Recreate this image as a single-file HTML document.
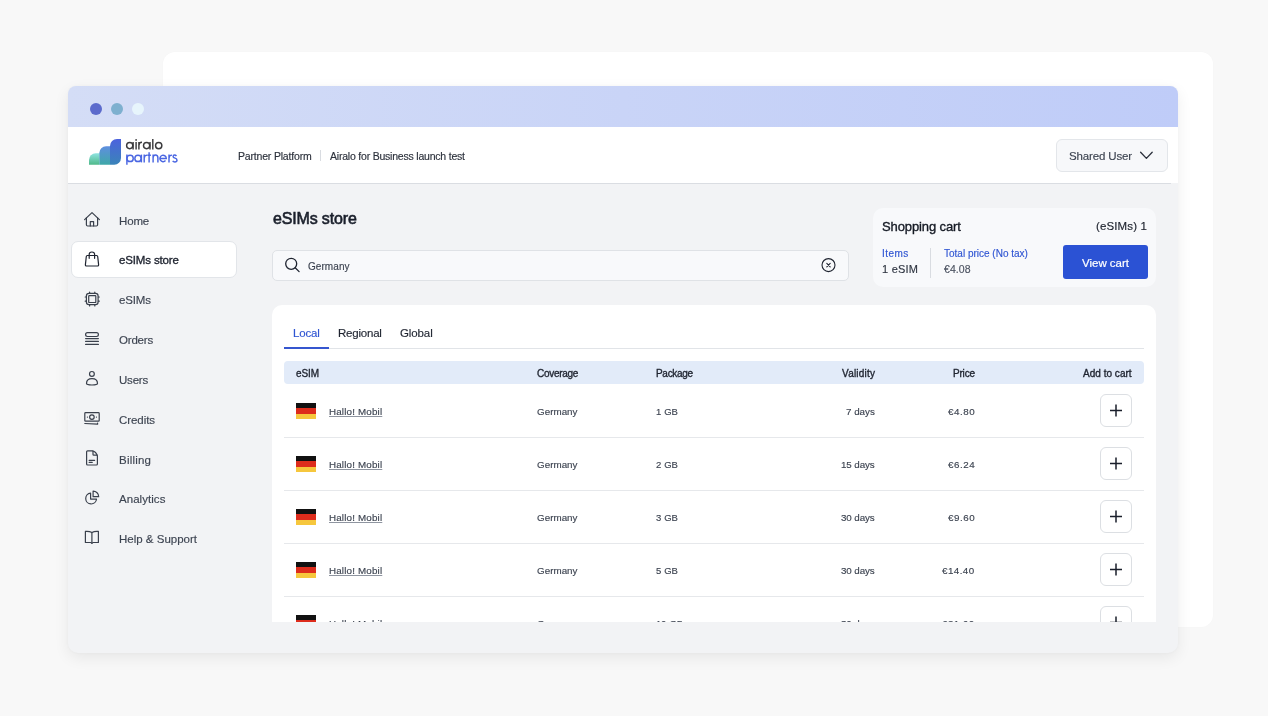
<!DOCTYPE html>
<html><head><meta charset="utf-8">
<style>
*{margin:0;padding:0;box-sizing:border-box}
html,body{width:1268px;height:716px;overflow:hidden;background:#f8f8f8;font-family:"Liberation Sans",sans-serif}
.a{position:absolute}
.t{position:absolute;white-space:nowrap;line-height:1;will-change:transform;font-family:"Liberation Sans",sans-serif}
#back{left:163px;top:52px;width:1050px;height:575px;border-radius:12px;background:#fff;box-shadow:0 0 2px rgba(0,0,0,0.02)}
#win{left:68px;top:86px;width:1110px;height:567px;border-radius:8px 8px 10px 10px;background:#f2f3f5;box-shadow:0 5px 15px rgba(0,0,0,0.07),0 0 3px rgba(0,0,0,0.03);overflow:hidden}
#titlebar{left:0;top:0;width:1110px;height:41px;background:linear-gradient(90deg,#d4ddf6 0%,#c9d4f7 50%,#bfccf8 100%)}
.dot{width:12px;height:12px;border-radius:50%;top:17px}
#header{left:0;top:41px;width:1110px;height:56px;background:#fff}
#hline{left:0;top:97px;width:1103px;height:1px;background:#dadde2}
#dd{left:1056px;top:139px;width:112px;height:33px;border-radius:6px;background:#f7f8fa;border:1px solid #e3e6ea}
#hdiv{left:320px;top:150px;width:1px;height:11px;background:#d9dce1}
#active{left:70.5px;top:241px;width:166px;height:36.5px;border-radius:7px;background:#fff;border:1px solid #e2e5e9}
#search{left:272px;top:250px;width:577px;height:30.5px;border-radius:5px;background:#f8f9fb;border:1px solid #dfe2e6}
#cart{left:873px;top:207.5px;width:283px;height:79.5px;border-radius:10px;background:#f8f9fb}
#cdiv{left:930px;top:247.5px;width:1px;height:30px;background:#d9dce1}
#vbtn{left:1063px;top:245px;width:85px;height:34px;border-radius:3px;background:#2b52d4}
#clip{left:0;top:0;width:1268px;height:621.5px;overflow:hidden}
#card{left:272px;top:304.5px;width:884px;height:400px;border-radius:10px;background:#fff}
#tabline{left:284px;top:348px;width:860px;height:1px;background:#e1e4e8}
#tabul{left:284px;top:347px;width:45px;height:2px;background:#3556cf}
#thead{left:284px;top:361px;width:860px;height:23px;border-radius:4px;background:#e2ebf9}
.sep{left:284px;width:860px;height:1px;background:#e6e8eb}
.flag{left:295.6px;width:20.4px;height:15.6px;background:linear-gradient(180deg,#111 0 33.3%,#dd2c1c 33.3% 66.6%,#f6c73d 66.6% 100%)}
.plus{left:1100px;width:32px;height:32.5px;border-radius:6px;border:1px solid #dcdfe3;background:#fff}
svg{position:absolute;overflow:visible}
</style></head>
<body>
<div id="back" class="a"></div>
<div id="win" class="a">
  <div id="titlebar" class="a"></div>
  <div class="a dot" style="left:22px;background:#5c6bcc"></div>
  <div class="a dot" style="left:43px;background:#7eb0cf"></div>
  <div class="a dot" style="left:64px;background:#e7f5fc"></div>
  <div id="header" class="a"></div>
  <div id="hline" class="a"></div>
</div>
<!-- logo -->
<svg style="left:0;top:0" width="1268" height="716" viewBox="0 0 1268 716">
  <defs>
    <linearGradient id="g1" x1="0" y1="0" x2="0" y2="1"><stop offset="0" stop-color="#8fe3e0"/><stop offset="1" stop-color="#4fb98a"/></linearGradient>
    <linearGradient id="g2" x1="0" y1="0" x2="0" y2="1"><stop offset="0" stop-color="#5f8ee0"/><stop offset="1" stop-color="#3fa8a8"/></linearGradient>
    <linearGradient id="g3" x1="0" y1="0" x2="0" y2="1"><stop offset="0" stop-color="#4c62de"/><stop offset="1" stop-color="#3a84b8"/></linearGradient>
  </defs>
  <path d="M89 164.7 V160 A6.7 6.7 0 0 1 95.7 153.3 H99.3 V164.7 Z" fill="url(#g1)"/>
  <path d="M99.3 164.7 V153 A6.8 6.8 0 0 1 106.1 146.2 H110 V164.7 Z" fill="url(#g2)"/>
  <path d="M110 164.7 V146 A7 7 0 0 1 117 139 H121 V158 A6.7 6.7 0 0 1 114.3 164.7 Z" fill="url(#g3)"/>
  <g fill="none" stroke="#3b3b3d" stroke-width="1.45" stroke-linecap="butt">
    <circle cx="129.7" cy="145.6" r="3.1"/><path d="M133.1 142 V149.4"/>
    <path d="M136.1 142 V149.4"/><circle cx="136.1" cy="139.9" r="0.9" fill="#3b3b3d" stroke="none"/>
    <path d="M138.9 142 V149.4 M138.9 145.4 Q139 142.3 142 142.3"/>
    <circle cx="146.6" cy="145.6" r="3.1"/><path d="M150 142 V149.4"/>
    <path d="M152.8 139 V149.4"/>
    <circle cx="158.7" cy="145.6" r="3.15"/>
  </g>
  <g fill="none" stroke="#4a66e2" stroke-width="1.45" stroke-linecap="butt">
    <circle cx="130.1" cy="158.4" r="3.15"/><path d="M126.9 154.6 V164.7"/>
    <circle cx="138" cy="158.4" r="3.15"/><path d="M141.4 154.6 V162.4"/>
    <path d="M144.2 154.6 V162.4 M144.2 158.2 Q144.3 155.1 147.3 155.1"/>
    <path d="M149.1 152.2 V162.4 M147.4 155.2 H150.9"/>
    <path d="M153.1 154.6 V162.4 M153.1 158 Q153.1 155 155.5 155 Q157.9 155 157.9 158 V162.4"/>
    <path d="M159.9 158.4 H166.3 A3.2 3.2 0 1 0 165.5 160.6"/>
    <path d="M169 154.6 V162.4 M169 158.2 Q169.1 155.1 172 155.1"/>
    <path d="M176.4 156.1 Q175.8 155 174.5 155 Q173.1 155 173.1 156.4 Q173.1 157.6 175 158.1 Q177 158.6 177 160.3 Q177 162 174.8 162 Q173.4 162 172.7 160.9"/>
  </g>
</svg>
<div id="dd" class="a"></div>
<div id="hdiv" class="a"></div>
<svg style="left:0;top:0" width="1268" height="716" viewBox="0 0 1268 716" fill="none" stroke="#2b303b" stroke-width="1.3" stroke-linecap="round" stroke-linejoin="round">
  <path d="M1140.6 152.2 L1146.4 158.4 L1152.2 152.2"/>
</svg>
<div id="active" class="a"></div>
<!-- sidebar icons -->
<svg style="left:0;top:0" width="1268" height="716" viewBox="0 0 1268 716" fill="none" stroke="#3a404c" stroke-width="1.2" stroke-linecap="round" stroke-linejoin="round">
  <!-- home -->
  <path d="M84.6 219.6 L92 212.6 L99.4 219.6"/>
  <path d="M86.4 217.8 V224.8 Q86.4 226 87.6 226 H96.4 Q97.6 226 97.6 224.8 V217.8"/>
  <path d="M90.3 226 V221.6 H93.6 V226"/>
  <!-- bag -->
  <path d="M87.3 255.5 H96.6 Q97.6 255.5 97.7 256.5 L98.6 264.6 Q98.8 266 97.4 266 H86.6 Q85.2 266 85.4 264.6 L86.3 256.5 Q86.4 255.5 87.3 255.5 Z" stroke="#1f2430"/>
  <path d="M89.2 258.3 V254.3 Q89.2 252 91.9 252 Q94.6 252 94.6 254.3 V258.3" stroke="#1f2430"/>
  <!-- chip -->
  <rect x="86.4" y="293.4" width="11.7" height="11.3" rx="2.6"/>
  <rect x="88.7" y="295.6" width="7.1" height="6.9" rx="0.6"/>
  <path d="M89.6 292.2 V293.2 M94.8 292.2 V293.2 M89.6 304.9 V305.9 M94.8 304.9 V305.9 M85.2 297 H86.2 M85.2 301.2 H86.2 M98.3 297 H99.3 M98.3 301.2 H99.3"/>
  <!-- orders -->
  <rect x="85.6" y="332.7" width="12.8" height="3.8" rx="1.9"/>
  <path d="M85.6 338.6 H98.4 M85.6 341.4 H98.4 M85.6 344.4 H98.4"/>
  <!-- users -->
  <circle cx="91.9" cy="373.9" r="2.4"/>
  <path d="M86.5 383.6 C86.5 380.4 88.9 378.7 92 378.7 C95.1 378.7 97.5 380.4 97.5 383.6 C97.5 384.7 95 385 92 385 C89 385 86.5 384.7 86.5 383.6 Z"/>
  <!-- credits -->
  <rect x="84.8" y="412.6" width="14.4" height="8.6" rx="0.8"/>
  <circle cx="91.9" cy="417.1" r="2.3"/>
  <path d="M87.4 417.1 h0.1 M96.4 417.1 h0.1"/>
  <path d="M84.8 423.5 L97.6 424.1 V423"/>
  <!-- billing -->
  <path d="M87.6 450.8 H92.4 Q96.2 451.6 97.4 456 V464 Q97.4 465 96.4 465 H87.6 Q86.6 465 86.6 464 V451.8 Q86.6 450.8 87.6 450.8 Z"/>
  <path d="M93 451 V454.4 Q93 455.2 93.8 455.2 H97.2"/>
  <path d="M89.2 460.4 H94.6 M89.2 462.4 H92.2"/>
  <!-- analytics -->
  <path d="M90.6 493.2 A5.4 5.4 0 1 0 96.5 499.1 H90.6 Z"/>
  <path d="M93.1 491.1 V496.7 H98.7 A5.6 5.6 0 0 0 93.1 491.1 Z"/>
  <!-- help book -->
  <path d="M85.4 531.4 Q89.4 531 91.9 532.6 Q94.4 531 98.4 531.4 V542.5 H93.2 Q91.9 542.6 91.9 543.4 Q91.9 542.6 90.6 542.5 H85.4 Z"/>
  <path d="M91.9 532.8 V543"/>
</svg>
<div id="search" class="a"></div>
<svg style="left:0;top:0" width="1268" height="716" viewBox="0 0 1268 716" fill="none" stroke="#1f2430" stroke-width="1.3" stroke-linecap="round">
  <circle cx="291.2" cy="263.8" r="5.5"/>
  <path d="M295.2 267.8 L299.1 271.6"/>
  <circle cx="828.5" cy="265.1" r="6.5" stroke-width="1.1"/>
  <path d="M826.8 263.4 L830.2 266.8 M830.2 263.4 L826.8 266.8" stroke-width="1.1"/>
</svg>
<div id="cart" class="a"></div>
<div id="cdiv" class="a"></div>
<div id="vbtn" class="a"></div>
<div id="clip" class="a">
  <div id="card" class="a"></div>
  <div id="tabline" class="a"></div>
  <div id="tabul" class="a"></div>
  <div id="thead" class="a"></div>
  <div class="a sep" style="top:437px"></div>
  <div class="a sep" style="top:490px"></div>
  <div class="a sep" style="top:543px"></div>
  <div class="a sep" style="top:596px"></div>
  <div class="a flag" style="top:403px"></div>
  <div class="a flag" style="top:456px"></div>
  <div class="a flag" style="top:509px"></div>
  <div class="a flag" style="top:562px"></div>
  <div class="a flag" style="top:615px"></div>
  <div class="a plus" style="top:394.2px"></div>
  <div class="a plus" style="top:447.2px"></div>
  <div class="a plus" style="top:500.2px"></div>
  <div class="a plus" style="top:553.2px"></div>
  <div class="a plus" style="top:606.2px"></div>
  <svg style="left:0;top:0" width="1268" height="716" viewBox="0 0 1268 716" fill="none" stroke="#1a1f2b" stroke-width="1.5">
    <path d="M1110 410.5 H1122 M1116 404.5 V416.5"/>
    <path d="M1110 463.5 H1122 M1116 457.5 V469.5"/>
    <path d="M1110 516.5 H1122 M1116 510.5 V522.5"/>
    <path d="M1110 569.5 H1122 M1116 563.5 V575.5"/>
    <path d="M1110 622.5 H1122 M1116 616.5 V628.5"/>
  </svg>
<div class="t" style="top:151.00px;font-size:10.5px;color:#2b303b;letter-spacing:-0.183px;left:237.50px;-webkit-text-stroke:0.15px currentColor;">Partner Platform</div>
<div class="t" style="top:151.00px;font-size:10.5px;color:#2b303b;letter-spacing:-0.208px;left:330.20px;-webkit-text-stroke:0.15px currentColor;">Airalo for Business launch test</div>
<div class="t" style="top:151.00px;font-size:11.5px;color:#3d4451;letter-spacing:-0.136px;left:1068.50px;-webkit-text-stroke:0.15px currentColor;">Shared User</div>
<div class="t" style="top:216.00px;font-size:11.5px;color:#3d4451;letter-spacing:-0.159px;left:119.00px;-webkit-text-stroke:0.15px currentColor;">Home</div>
<div class="t" style="top:255.00px;font-size:11.5px;color:#1f2430;letter-spacing:-0.145px;left:119.00px;-webkit-text-stroke:0.35px currentColor;">eSIMs store</div>
<div class="t" style="top:295.00px;font-size:11.5px;color:#3d4451;letter-spacing:-0.148px;left:119.00px;-webkit-text-stroke:0.15px currentColor;">eSIMs</div>
<div class="t" style="top:335.00px;font-size:11.5px;color:#3d4451;letter-spacing:-0.189px;left:119.00px;-webkit-text-stroke:0.15px currentColor;">Orders</div>
<div class="t" style="top:375.00px;font-size:11.5px;color:#3d4451;letter-spacing:-0.208px;left:119.00px;-webkit-text-stroke:0.15px currentColor;">Users</div>
<div class="t" style="top:415.00px;font-size:11.5px;color:#3d4451;letter-spacing:-0.071px;left:119.00px;-webkit-text-stroke:0.15px currentColor;">Credits</div>
<div class="t" style="top:455.00px;font-size:11.5px;color:#3d4451;letter-spacing:0.220px;left:119.00px;-webkit-text-stroke:0.15px currentColor;">Billing</div>
<div class="t" style="top:494.00px;font-size:11.5px;color:#3d4451;letter-spacing:0.048px;left:119.00px;-webkit-text-stroke:0.15px currentColor;">Analytics</div>
<div class="t" style="top:534.00px;font-size:11.5px;color:#3d4451;left:119.00px;-webkit-text-stroke:0.15px currentColor;">Help &amp; Support</div>
<div class="t" style="top:211.00px;font-size:16px;color:#1a1f2b;letter-spacing:-0.156px;left:272.60px;-webkit-text-stroke:0.6px currentColor;">eSIMs store</div>
<div class="t" style="top:262.00px;font-size:10px;color:#3d4451;letter-spacing:0.063px;left:308.00px;-webkit-text-stroke:0.15px currentColor;">Germany</div>
<div class="t" style="top:220.00px;font-size:13px;color:#151a24;letter-spacing:-0.110px;left:882.00px;-webkit-text-stroke:0.35px currentColor;">Shopping cart</div>
<div class="t" style="top:221.00px;font-size:11.5px;color:#1a1f2a;letter-spacing:0.120px;right:120.88px;-webkit-text-stroke:0.15px currentColor;">(eSIMs) 1</div>
<div class="t" style="top:249.00px;font-size:10px;color:#2f55d2;letter-spacing:0.438px;left:882.00px;-webkit-text-stroke:0.15px currentColor;">Items</div>
<div class="t" style="top:249.00px;font-size:10px;color:#2f55d2;left:943.60px;-webkit-text-stroke:0.15px currentColor;">Total price (No tax)</div>
<div class="t" style="top:264.00px;font-size:11px;color:#2f3541;letter-spacing:0.230px;left:882.00px;-webkit-text-stroke:0.15px currentColor;">1 eSIM</div>
<div class="t" style="top:264.00px;font-size:10.5px;color:#4b5260;letter-spacing:0.056px;left:943.60px;-webkit-text-stroke:0.15px currentColor;">€4.08</div>
<div class="t" style="top:258.00px;font-size:11.5px;color:#ffffff;letter-spacing:-0.010px;left:1082.00px;-webkit-text-stroke:0.2px currentColor;">View cart</div>
<div class="t" style="top:328.00px;font-size:11.5px;color:#2f55d2;letter-spacing:-0.173px;left:293.00px;-webkit-text-stroke:0.15px currentColor;">Local</div>
<div class="t" style="top:328.00px;font-size:11.5px;color:#1f2430;letter-spacing:-0.213px;left:337.70px;-webkit-text-stroke:0.15px currentColor;">Regional</div>
<div class="t" style="top:328.00px;font-size:11.5px;color:#1f2430;letter-spacing:-0.108px;left:399.80px;-webkit-text-stroke:0.15px currentColor;">Global</div>
<div class="t" style="top:369.00px;font-size:10px;color:#1f2430;letter-spacing:-0.080px;left:295.60px;-webkit-text-stroke:0.35px currentColor;">eSIM</div>
<div class="t" style="top:369.00px;font-size:10px;color:#1f2430;letter-spacing:-0.294px;left:536.60px;-webkit-text-stroke:0.35px currentColor;">Coverage</div>
<div class="t" style="top:369.00px;font-size:10px;color:#1f2430;letter-spacing:-0.303px;left:656.40px;-webkit-text-stroke:0.35px currentColor;">Package</div>
<div class="t" style="top:369.00px;font-size:10px;color:#1f2430;letter-spacing:0.215px;right:392.78px;-webkit-text-stroke:0.35px currentColor;">Validity</div>
<div class="t" style="top:369.00px;font-size:10px;color:#1f2430;letter-spacing:-0.196px;right:293.70px;-webkit-text-stroke:0.35px currentColor;">Price</div>
<div class="t" style="top:369.00px;font-size:10px;color:#1f2430;letter-spacing:0.024px;right:135.98px;-webkit-text-stroke:0.35px currentColor;">Add to cart</div>
<div class="t" style="top:407.00px;font-size:9.8px;color:#3d4451;letter-spacing:0.175px;left:328.50px;-webkit-text-stroke:0.15px currentColor;text-decoration:underline;text-decoration-color:#8f95a0;text-underline-offset:0.5px;text-decoration-thickness:1px;">Hallo! Mobil</div>
<div class="t" style="top:407.00px;font-size:9.8px;color:#3d4451;letter-spacing:0.035px;left:536.60px;-webkit-text-stroke:0.15px currentColor;">Germany</div>
<div class="t" style="top:407.00px;font-size:9.5px;color:#3d4451;letter-spacing:-0.216px;left:656.40px;-webkit-text-stroke:0.15px currentColor;word-spacing:0.8px;">1 GB</div>
<div class="t" style="top:407.00px;font-size:9.8px;color:#3d4451;right:393.49px;-webkit-text-stroke:0.15px currentColor;">7 days</div>
<div class="t" style="top:407.00px;font-size:9.8px;color:#3d4451;letter-spacing:0.571px;right:293.13px;-webkit-text-stroke:0.15px currentColor;">€4.80</div>
<div class="t" style="top:460.00px;font-size:9.8px;color:#3d4451;letter-spacing:0.175px;left:328.50px;-webkit-text-stroke:0.15px currentColor;text-decoration:underline;text-decoration-color:#8f95a0;text-underline-offset:0.5px;text-decoration-thickness:1px;">Hallo! Mobil</div>
<div class="t" style="top:460.00px;font-size:9.8px;color:#3d4451;letter-spacing:0.035px;left:536.60px;-webkit-text-stroke:0.15px currentColor;">Germany</div>
<div class="t" style="top:460.00px;font-size:9.5px;color:#3d4451;letter-spacing:-0.216px;left:656.40px;-webkit-text-stroke:0.15px currentColor;word-spacing:0.8px;">2 GB</div>
<div class="t" style="top:460.00px;font-size:9.8px;color:#3d4451;letter-spacing:-0.099px;right:393.60px;-webkit-text-stroke:0.15px currentColor;">15 days</div>
<div class="t" style="top:460.00px;font-size:9.8px;color:#3d4451;letter-spacing:0.571px;right:293.13px;-webkit-text-stroke:0.15px currentColor;">€6.24</div>
<div class="t" style="top:513.00px;font-size:9.8px;color:#3d4451;letter-spacing:0.175px;left:328.50px;-webkit-text-stroke:0.15px currentColor;text-decoration:underline;text-decoration-color:#8f95a0;text-underline-offset:0.5px;text-decoration-thickness:1px;">Hallo! Mobil</div>
<div class="t" style="top:513.00px;font-size:9.8px;color:#3d4451;letter-spacing:0.035px;left:536.60px;-webkit-text-stroke:0.15px currentColor;">Germany</div>
<div class="t" style="top:513.00px;font-size:9.5px;color:#3d4451;letter-spacing:-0.216px;left:656.40px;-webkit-text-stroke:0.15px currentColor;word-spacing:0.8px;">3 GB</div>
<div class="t" style="top:513.00px;font-size:9.8px;color:#3d4451;letter-spacing:-0.099px;right:393.60px;-webkit-text-stroke:0.15px currentColor;">30 days</div>
<div class="t" style="top:513.00px;font-size:9.8px;color:#3d4451;letter-spacing:0.571px;right:293.13px;-webkit-text-stroke:0.15px currentColor;">€9.60</div>
<div class="t" style="top:566.00px;font-size:9.8px;color:#3d4451;letter-spacing:0.175px;left:328.50px;-webkit-text-stroke:0.15px currentColor;text-decoration:underline;text-decoration-color:#8f95a0;text-underline-offset:0.5px;text-decoration-thickness:1px;">Hallo! Mobil</div>
<div class="t" style="top:566.00px;font-size:9.8px;color:#3d4451;letter-spacing:0.035px;left:536.60px;-webkit-text-stroke:0.15px currentColor;">Germany</div>
<div class="t" style="top:566.00px;font-size:9.5px;color:#3d4451;letter-spacing:-0.216px;left:656.40px;-webkit-text-stroke:0.15px currentColor;word-spacing:0.8px;">5 GB</div>
<div class="t" style="top:566.00px;font-size:9.8px;color:#3d4451;letter-spacing:-0.099px;right:393.60px;-webkit-text-stroke:0.15px currentColor;">30 days</div>
<div class="t" style="top:566.00px;font-size:9.8px;color:#3d4451;letter-spacing:0.439px;right:293.26px;-webkit-text-stroke:0.15px currentColor;">€14.40</div>
<div class="t" style="top:619.00px;font-size:9.8px;color:#3d4451;letter-spacing:0.175px;left:328.50px;-webkit-text-stroke:0.15px currentColor;text-decoration:underline;text-decoration-color:#8f95a0;text-underline-offset:0.5px;text-decoration-thickness:1px;">Hallo! Mobil</div>
<div class="t" style="top:619.00px;font-size:9.8px;color:#3d4451;letter-spacing:0.035px;left:536.60px;-webkit-text-stroke:0.15px currentColor;">Germany</div>
<div class="t" style="top:619.00px;font-size:9.5px;color:#3d4451;letter-spacing:-0.171px;left:656.40px;-webkit-text-stroke:0.15px currentColor;word-spacing:0.8px;">10 GB</div>
<div class="t" style="top:619.00px;font-size:9.8px;color:#3d4451;letter-spacing:-0.099px;right:393.60px;-webkit-text-stroke:0.15px currentColor;">30 days</div>
<div class="t" style="top:619.00px;font-size:9.8px;color:#3d4451;letter-spacing:0.439px;right:293.26px;-webkit-text-stroke:0.15px currentColor;">€21.60</div>
</div>
</body></html>
